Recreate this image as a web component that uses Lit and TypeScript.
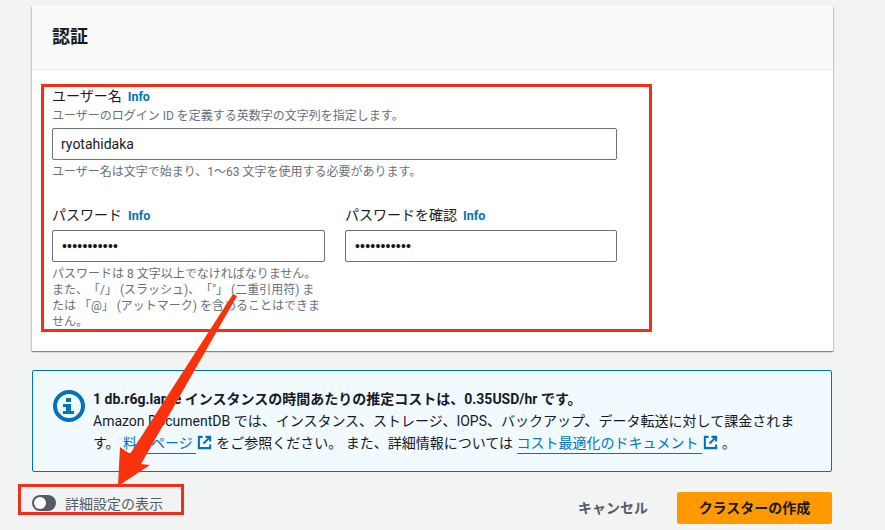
import { LitElement, html, css, svg } from "lit";
import { customElement } from "lit/decorators.js";

const ext = svg`<svg class="ext" viewBox="0 0 16 16" width="15" height="15" fill="none" stroke="#0073bb" stroke-width="2.2"><path d="M9 2H14V7"/><path d="M14 2L7 9"/><path d="M6 2H2V14H14V10"/></svg>`;

@customElement("app-root")
export class AppRoot extends LitElement {
  static styles = css`
    :host { display: block; position: relative; width: 885px; height: 530px; overflow: hidden; background: #f2f3f3;
      font-family: Roboto, "Noto Sans CJK JP", sans-serif; font-size: 14px; color: #16191f; text-spacing-trim: space-all; }
    .page { display: flex; flex-direction: column; padding: 6px 52px 0 32px; }
    .card { background: #fff; height: 345px; box-sizing: border-box; box-shadow: 0 1px 1px 0 rgba(0,28,36,.3), 1px 1px 1px 0 rgba(0,28,36,.15), -1px 1px 1px 0 rgba(0,28,36,.15); }
    .head { height: 64px; box-sizing: border-box; background: #fafafa; border-bottom: 1px solid #eaeded; padding: 19px 20px 0; font-size: 18px; font-weight: 700; line-height: 24px; }
    .body { padding: 18px 20px 0; width: 565px; }
    .label { line-height: 16px; display: flex; align-items: baseline; gap: 6px; margin-bottom: 3px; }
    .info { color: #0073bb; font-size: 12.5px; font-weight: 700; }
    .desc { font-size: 12px; line-height: 16px; color: #687078; }
    .input { height: 32px; box-sizing: border-box; border: 1px solid #687078; border-radius: 2px; background: #fff; display: flex; align-items: center; padding: 0 8px; margin-top: 4px; }
    .dots { font-family: "Liberation Sans", sans-serif; letter-spacing: 0.2px; padding-left: 1px; }
    .hint { margin-top: 4px; }
    .row { display: grid; grid-template-columns: 273px 272px; gap: 20px; margin-top: 27px; }
    .row .label { margin-bottom: 0; }
    .row .input { margin-top: 6px; }
    .notice { margin: 19px 1px 0 0; height: 102px; box-sizing: border-box; border: 1px solid #0073bb; border-radius: 2px; background: #f1faff; display: flex; gap: 8px; padding: 17px 20px; }
    .notice svg.i { flex: none; margin-top: 2px; }
    .text { line-height: 22px; white-space: nowrap; }
    .text b { font-weight: 700; }
    a { color: #0073bb; border-bottom: 1px solid #0073bb; padding-bottom: 2px; text-decoration: none; }
    .ext { vertical-align: -2px; margin: 0 4px 0 1px; }
    .foot { display: flex; align-items: center; margin: 20px 1px 0 0; height: 32px; }
    .toggle { display: flex; align-items: center; gap: 9px; padding-bottom: 10px; color: #545b64; }
    .sw { width: 24px; height: 16px; border-radius: 8px; background: #545b64; position: relative; }
    .sw::after { content: ""; position: absolute; left: 2px; top: 2px; width: 12px; height: 12px; border-radius: 50%; background: #fff; }
    .spacer { flex: 1; }
    .cancel { font-weight: 700; color: #545b64; margin-right: 29px; padding-bottom: 2px; }
    .primary { width: 155px; height: 32px; box-sizing: border-box; padding-bottom: 2px; background: #ff9900; border-radius: 2px; font-weight: 700; display: flex; align-items: center; justify-content: center; }
    .box1 { position: absolute; left: 41px; top: 84px; width: 611px; height: 248px; box-sizing: border-box; border: 3px solid #f0301a; }
    .box2 { position: absolute; left: 18px; top: 484px; width: 166px; height: 31px; box-sizing: border-box; border: 3px solid #f0301a; }
    .arrow { position: absolute; left: 0; top: 0; }
  `;
  render() {
    return html`
      <div class="page">
        <div class="card">
          <div class="head">認証</div>
          <div class="body">
            <div class="label">ユーザー名 <span class="info">Info</span></div>
            <div class="desc">ユーザーのログイン ID を定義する英数字の文字列を指定します。</div>
            <div class="input">ryotahidaka</div>
            <div class="desc hint">ユーザー名は文字で始まり、1～63 文字を使用する必要があります。</div>
            <div class="row">
              <div>
                <div class="label">パスワード <span class="info">Info</span></div>
                <div class="input"><span class="dots">•••••••••••</span></div>
                <div class="desc hint">パスワードは 8 文字以上でなければなりません。また、「/」 (スラッシュ)、「"」 (二重引用符) または 「@」 (アットマーク) を含めることはできません。</div>
              </div>
              <div>
                <div class="label">パスワードを確認 <span class="info">Info</span></div>
                <div class="input"><span class="dots">•••••••••••</span></div>
              </div>
            </div>
          </div>
        </div>
        <div class="notice">
          <svg class="i" width="32" height="32" viewBox="0 0 32 32"><circle cx="16" cy="16" r="14" fill="none" stroke="#0073bb" stroke-width="4"/><rect x="13" y="8" width="5" height="4" fill="#0073bb"/><path d="M10 14H18V21H21V24H10V21H13V17H10Z" fill="#0073bb"/></svg>
          <div class="text">
            <div><b>1 db.r6g.large インスタンスの時間あたりの推定コストは、0.35USD/hr です。</b></div>
            <div>Amazon DocumentDB では、インスタンス、ストレージ、IOPS、バックアップ、データ転送に対して課金されま</div>
            <div>す。 <a href="#">料金ページ&nbsp;</a>${ext}をご参照ください。 また、詳細情報については <a href="#">コスト最適化のドキュメント&nbsp;</a>${ext}。</div>
          </div>
        </div>
        <div class="foot">
          <div class="toggle"><span class="sw"></span>詳細設定の表示</div>
          <div class="spacer"></div>
          <div class="cancel">キャンセル</div>
          <div class="primary">クラスターの作成</div>
        </div>
      </div>
      <svg class="arrow" width="885" height="530" viewBox="0 0 885 530">
        <path d="M233 294L237 296L141 464L150 465L118 486L120 447L130 454Z" fill="#f9310c"/>
      </svg>
      <div class="box1"></div>
      <div class="box2"></div>
    `;
  }
}
